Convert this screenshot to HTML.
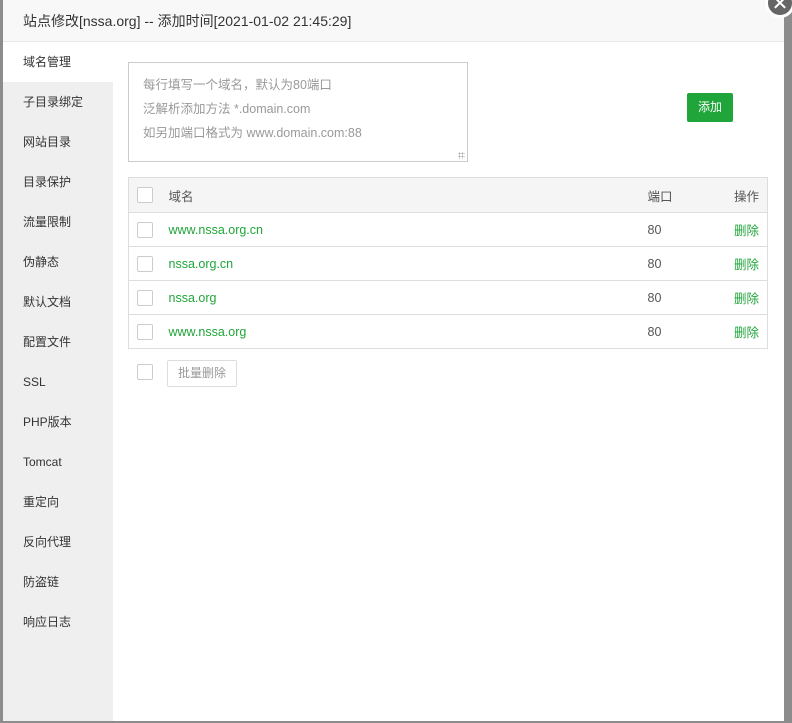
<!DOCTYPE html>
<html><head><meta charset="utf-8"><style>
*{margin:0;padding:0;box-sizing:border-box}
body{width:792px;height:723px;background:#8c8c8c;position:relative;overflow:hidden;font-family:"Liberation Sans","Noto Sans CJK SC",sans-serif;font-size:12px;color:#333}
.dlg{position:absolute;left:3px;top:0;width:781px;height:721px;background:#fff}
.hd{height:42px;background:#f8f8f8;border-bottom:1px solid #e8e8e8;padding-left:20px;line-height:42px;font-size:14px;color:#333}
.side{position:absolute;left:0;top:42px;width:110px;bottom:0;background:#efefef}
.side div{height:40px;line-height:40px;padding-left:20px;font-size:12px;color:#333}
.side div.on{background:#fff}
.ta{position:absolute;left:125px;top:62px;width:340px;height:100px;border:1px solid #ccc;padding:10px 14px;color:#999;line-height:24px;font-size:12.5px}
.grip{position:absolute;right:2px;bottom:2px;width:7px;height:7px;background:radial-gradient(circle,#aaa 0.8px,transparent 1px) 0 0/3px 3px}
.btn{position:absolute;left:684px;top:93px;width:46px;height:29px;background:#20a53a;border-radius:2px;color:#fff;text-align:center;line-height:29px;font-size:12px}
table{position:absolute;left:125px;top:177px;width:640px;border-collapse:collapse;border:1px solid #ddd}
td{height:34px;border-top:1px solid #ddd;font-size:12.5px;color:#555}
tr.h td{background:#f5f5f5;border-top:none;height:35px}
.cb{display:inline-block;width:16px;height:16px;border:1px solid #ccc;border-radius:2px;vertical-align:middle;background:#fff}
.g{color:#20a53a}
.c1{width:40px;padding-left:8px}
.c3{width:80px}
.c4{text-align:right;padding-right:8px;width:40px}
.bot{position:absolute;left:134px;top:364px}
.bb{position:absolute;left:164px;top:360px;width:70px;height:27px;border:1px solid #ddd;border-radius:2px;color:#999;text-align:center;line-height:25px}
.close{position:absolute;left:765px;top:-12px;width:30px;height:30px;border-radius:50%;background:#666;border:3px solid #fff;color:#fff;text-align:center;font-size:20px;line-height:26px}
</style></head><body>
<div class="dlg">
<div class="hd">站点修改[nssa.org] -- 添加时间[2021-01-02 21:45:29]</div>
<div class="side">
<div class="on">域名管理</div><div>子目录绑定</div><div>网站目录</div><div>目录保护</div><div>流量限制</div><div>伪静态</div><div>默认文档</div><div>配置文件</div><div>SSL</div><div>PHP版本</div><div>Tomcat</div><div>重定向</div><div>反向代理</div><div>防盗链</div><div>响应日志</div>
</div>
<div class="ta">每行填写一个域名，默认为80端口<br>泛解析添加方法 *.domain.com<br>如另加端口格式为 www.domain.com:88<span class="grip"></span></div>
<div class="btn">添加</div>
<table>
<tr class="h"><td class="c1"><span class="cb"></span></td><td>域名</td><td class="c3">端口</td><td class="c4">操作</td></tr>
<tr><td class="c1"><span class="cb"></span></td><td class="g">www.nssa.org.cn</td><td class="c3">80</td><td class="c4 g">删除</td></tr>
<tr><td class="c1"><span class="cb"></span></td><td class="g">nssa.org.cn</td><td class="c3">80</td><td class="c4 g">删除</td></tr>
<tr><td class="c1"><span class="cb"></span></td><td class="g">nssa.org</td><td class="c3">80</td><td class="c4 g">删除</td></tr>
<tr><td class="c1"><span class="cb"></span></td><td class="g">www.nssa.org</td><td class="c3">80</td><td class="c4 g">删除</td></tr>
</table>
<span class="cb bot"></span>
<div class="bb">批量删除</div>
</div>
<div class="close">✕</div>
</body></html>
